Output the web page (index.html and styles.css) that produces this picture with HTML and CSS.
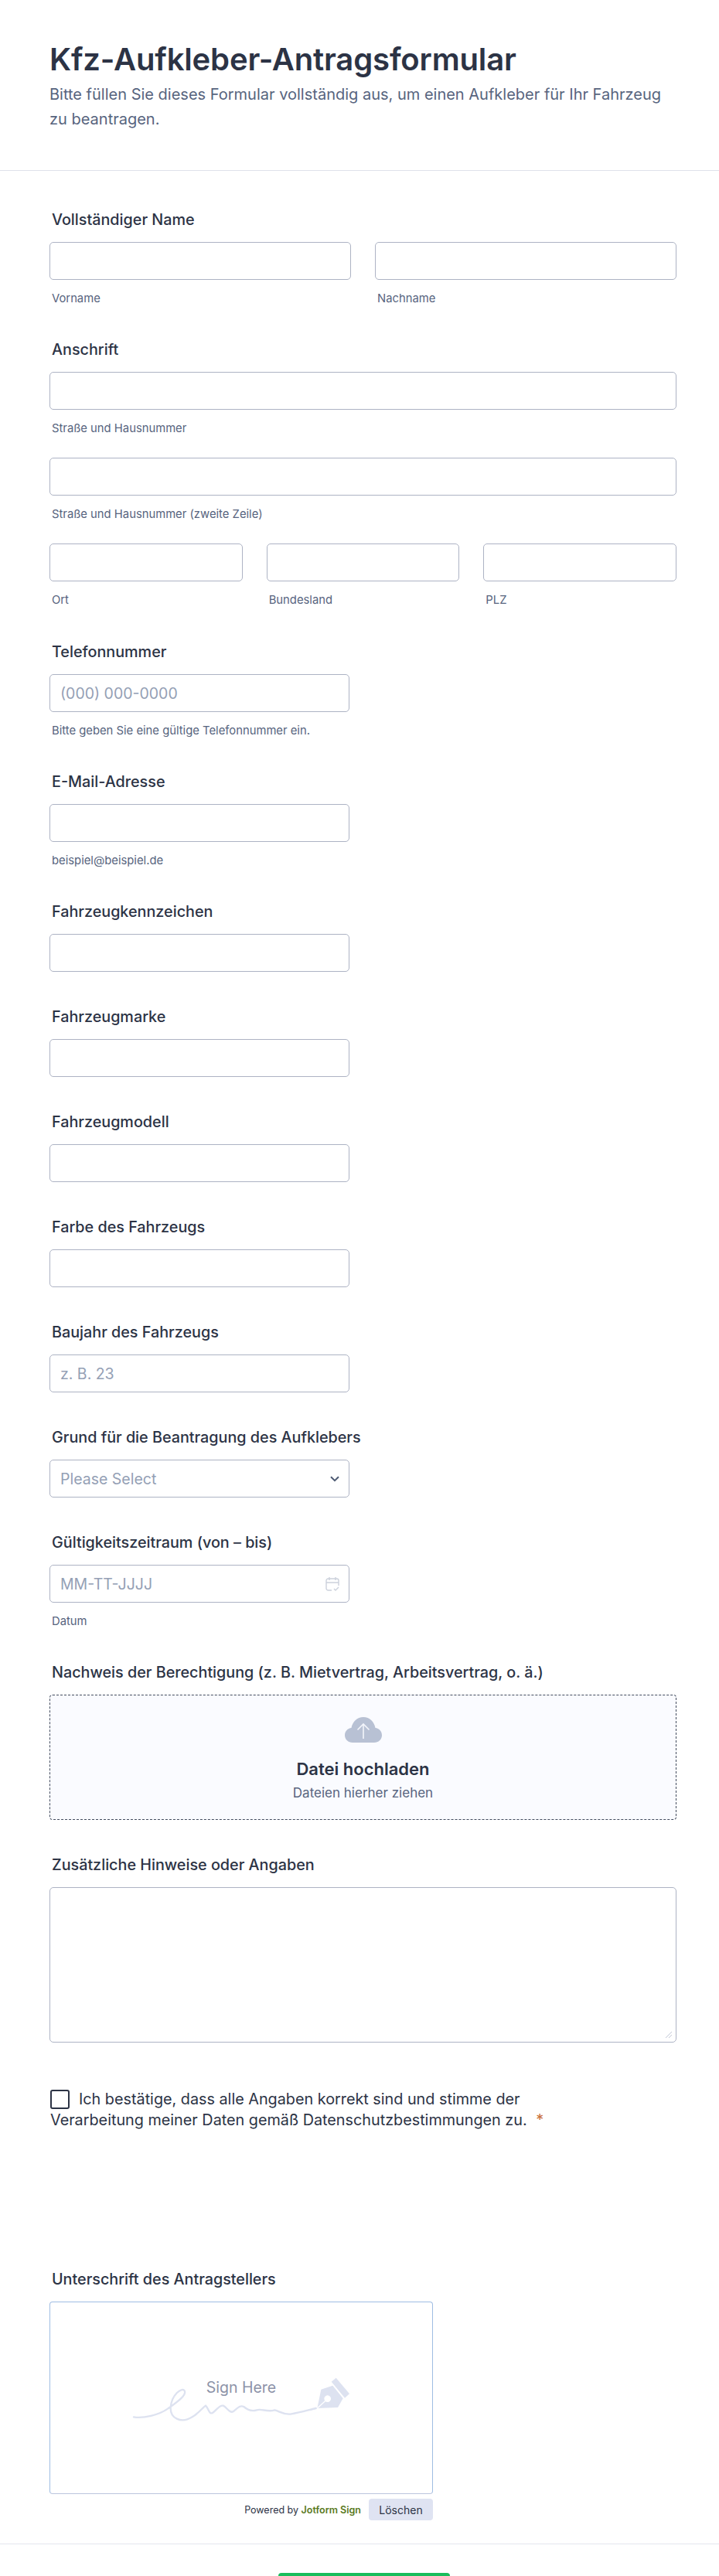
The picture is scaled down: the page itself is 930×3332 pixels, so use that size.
FILE: index.html
```html
<!DOCTYPE html>
<html lang="de">

<head>
  <meta charset="UTF-8">
  <title>Kfz-Aufkleber-Antragsformular</title>
  <link rel="stylesheet" href="styles.css">
</head>

<body>
  <form class="page">
    <header class="head">
      <h1>Kfz-Aufkleber-Antragsformular</h1>
      <p>Bitte füllen Sie dieses Formular vollständig aus, um einen Aufkleber für Ihr Fahrzeug zu beantragen.</p>
    </header>

    <div class="fields">
      <div class="field">
        <label class="lbl">Vollständiger Name</label>
        <div class="cols two">
          <div><div class="box"></div><small>Vorname</small></div>
          <div><div class="box"></div><small>Nachname</small></div>
        </div>
      </div>

      <div class="field addr">
        <label class="lbl">Anschrift</label>
        <div class="box"></div><small>Straße und Hausnummer</small>
        <div class="box next"></div><small>Straße und Hausnummer (zweite Zeile)</small>
        <div class="cols three next">
          <div><div class="box"></div><small>Ort</small></div>
          <div><div class="box"></div><small>Bundesland</small></div>
          <div><div class="box"></div><small>PLZ</small></div>
        </div>
      </div>

      <div class="field">
        <label class="lbl">Telefonnummer</label>
        <div class="box mid ph">(000) 000-0000</div>
        <small>Bitte geben Sie eine gültige Telefonnummer ein.</small>
      </div>

      <div class="field">
        <label class="lbl">E-Mail-Adresse</label>
        <div class="box mid"></div>
        <small>beispiel@beispiel.de</small>
      </div>

      <div class="field">
        <label class="lbl">Fahrzeugkennzeichen</label>
        <div class="box mid"></div>
      </div>

      <div class="field">
        <label class="lbl">Fahrzeugmarke</label>
        <div class="box mid"></div>
      </div>

      <div class="field">
        <label class="lbl">Fahrzeugmodell</label>
        <div class="box mid"></div>
      </div>

      <div class="field">
        <label class="lbl">Farbe des Fahrzeugs</label>
        <div class="box mid"></div>
      </div>

      <div class="field">
        <label class="lbl">Baujahr des Fahrzeugs</label>
        <div class="box mid ph">z. B. 23</div>
      </div>

      <div class="field">
        <label class="lbl">Grund für die Beantragung des Aufklebers</label>
        <div class="box mid ph with-icon">
          Please Select
          <svg class="chevron" width="12" height="8" viewBox="0 0 12 8"><path d="M1 1.2 6 6.2 11 1.2" fill="none" stroke="#4d5a73" stroke-width="2"/></svg>
        </div>
      </div>

      <div class="field">
        <label class="lbl">Gültigkeitszeitraum (von – bis)</label>
        <div class="box mid ph with-icon">
          MM-TT-JJJJ
          <svg class="cal" width="18" height="20" viewBox="0 0 18 20" fill="none" stroke="#ccd1dc" stroke-width="1.4">
            <path d="M8 18H3.5A2.5 2.5 0 0 1 1 15.500V5.500A2.500 2.500 0 0 1 3.500 3h11A2.500 2.500 0 0 1 17 5.500V12M1 8h16M5 1v4M13 1v4"/>
            <path d="M11 16l2 2 4-4"/>
          </svg>
        </div>
        <small>Datum</small>
      </div>

      <div class="field">
        <label class="lbl">Nachweis der Berechtigung (z. B. Mietvertrag, Arbeitsvertrag, o. ä.)</label>
        <div class="upload">
          <svg width="48" height="33" viewBox="0 0 48 33">
            <path d="M10 33C4.500 33 0 29 0 23.500 0 18 4 14.500 8.500 14 10 6 16 0 24 0s14 6 15.500 14C44 14.500 48 18 48 23.500 48 29 43.500 33 38 33Z" fill="#b8c1d4"/>
            <path d="M24 28V9M16.500 16.500 24 9l7.500 7.500" fill="none" stroke="#f3f5fb" stroke-width="1.600"/>
          </svg>
          <strong>Datei hochladen</strong>
          <span>Dateien hierher ziehen</span>
        </div>
      </div>

      <div class="field">
        <label class="lbl">Zusätzliche Hinweise oder Angaben</label>
        <div class="box area">
          <svg class="grip" width="10" height="10" viewBox="0 0 10 10"><path d="M1 9 9 1M5 9 9 5" stroke="#c3c8d6" stroke-width="1"/></svg>
        </div>
      </div>

      <div class="field agree">
        <span class="check"></span>Ich bestätige, dass alle Angaben korrekt sind und stimme der Verarbeitung meiner Daten gemäß Datenschutzbestimmungen zu. <em>*</em>
      </div>

      <div class="field sign">
        <label class="lbl">Unterschrift des Antragstellers</label>
        <div class="sign-box">
          <div class="sign-art">
            <svg width="340" height="110" viewBox="0 0 1020 330">
              <path d="M93 262C130 268 190 255 225 230 255 208 300 178 290 160 280 145 240 175 236 225 234 265 275 290 320 262 345 248 360 225 372 218 385 230 385 255 400 245 415 235 425 215 440 218 455 225 465 250 480 240 495 228 505 215 520 222 535 235 550 242 570 235 590 228 610 245 640 235 660 240 675 255 705 250 740 245 770 235 800 228" fill="none" stroke="#dde2f0" stroke-width="7" stroke-linecap="round"/>
              <path d="M860 125 878 110 930 172 912 188Z" fill="#dde2f0"/>
              <path d="M820 155 865 140 905 190 885 225 805 228ZM845 178a13 13 0 1 0 .1 0Z" fill="#dde2f0" fill-rule="evenodd"/>
              <path d="M806 227 838 198" stroke="#fff" stroke-width="4"/>
            </svg>
            <span>Sign Here</span>
          </div>
        </div>
        <div class="sign-foot">
          <span class="powered">Powered by <b>Jotform Sign</b></span>
          <button type="button" class="clear">Löschen</button>
        </div>
      </div>
    </div>

    <footer class="foot">
      <button type="button" class="submit"></button>
    </footer>
  </form>
</body>

</html>
```

FILE: styles.css
```css
html, body {
  margin: 0;
  height: 3332px;
  overflow: hidden;
  background: #fff;
}
body {
  font-family: Inter, "Liberation Sans", sans-serif;
  color: #2c3345;
}
.page {
  height: 3332px;
  overflow: hidden;
}
.head {
  height: 221px;
  box-sizing: border-box;
  padding: 53px 56px 0 64px;
  border-bottom: 1px solid #dfe1ea;
}
.head h1 {
  margin: 0;
  font-size: 40px;
  line-height: 48px;
  font-weight: 600;
  letter-spacing: -0.15px;
}
.head p {
  margin: 5px 0 0;
  font-size: 20px;
  line-height: 32px;
  color: #57647e;
}
.fields {
  padding: 53px 55px 0 64px;
}
.field {
  margin-bottom: 48px;
}
.addr {
  margin-bottom: 49px;
}
.lbl {
  display: block;
  height: 20px;
  margin: 0 0 19px 3px;
  font-size: 19.75px;
  line-height: 20px;
  font-weight: 500;
  color: #2c3345;
}
.box {
  box-sizing: border-box;
  height: 49px;
  padding: 1px 13px 0;
  border: 1px solid #adb3c4;
  border-radius: 5px;
  background: #fff;
  font-size: 19.5px;
  line-height: 47px;
}
.mid {
  width: 388px;
}
.ph {
  color: #94a0b5;
}
.with-icon {
  display: flex;
  align-items: center;
  justify-content: space-between;
}
.chevron {
  margin-right: -1px;
}
.cal {
  margin-right: -1px;
}
small {
  display: block;
  height: 16px;
  margin: 16px 0 0 3px;
  font-size: 14.8px;
  line-height: 16px;
  color: #57647e;
}
.next {
  margin-top: 30px;
}
.cols {
  display: grid;
}
.two {
  grid-template-columns: 1fr 1fr;
  gap: 31px;
}
.three {
  grid-template-columns: 1fr 1fr 1fr;
  gap: 31px;
}
.upload {
  box-sizing: border-box;
  height: 162px;
  padding-top: 28px;
  border: 1px dashed #434c5e;
  border-radius: 4px;
  background: #fafbff;
  display: flex;
  flex-direction: column;
  align-items: center;
}
.upload strong {
  margin-top: 22px;
  font-size: 22px;
  line-height: 24px;
  font-weight: 600;
}
.upload span {
  margin-top: 7px;
  font-size: 17px;
  line-height: 24px;
  color: #57647e;
}
.area {
  height: 201px;
  display: flex;
  align-items: flex-end;
  justify-content: flex-end;
  padding: 0 4px 4px 0;
}
.agree {
  width: 700px;
  margin: 60px 0 0 1px;
  font-size: 19.8px;
  line-height: 27px;
}
.check {
  display: inline-block;
  box-sizing: border-box;
  width: 25px;
  height: 25px;
  margin-right: 12px;
  vertical-align: -6px;
  border: 2px solid #2c3345;
  border-radius: 3px;
}
.agree em {
  margin-left: 6px;
  font-style: normal;
  color: #c96f3a;
}
.sign {
  margin-top: 182px;
  width: 496px;
  margin-bottom: 0;
}
.sign-box {
  box-sizing: border-box;
  height: 249px;
  border: 1px solid #9fbde3;
  border-bottom-color: #bcc6de;
  border-radius: 4px;
  display: flex;
  align-items: center;
  justify-content: center;
}
.sign-art {
  position: relative;
  width: 340px;
  height: 110px;
  margin-top: -15px;
}
.sign-art span {
  position: absolute;
  left: 0;
  right: 0;
  top: 37px;
  text-align: center;
  font-size: 19.5px;
  line-height: 24px;
  color: #8d93a8;
}
.sign-foot {
  display: flex;
  justify-content: flex-end;
  align-items: center;
  gap: 10px;
  margin-top: 6px;
}
.powered {
  font-size: 12.5px;
  color: #2c3345;
}
.powered b {
  font-weight: 600;
  color: #5a7a1e;
}
.clear {
  width: 83px;
  height: 28px;
  padding: 0;
  border: 0;
  border-radius: 4px;
  background: #dfe3f2;
  font: 14px Inter, sans-serif;
  color: #2c3345;
}
.foot {
  margin-top: 30px;
  padding-top: 37px;
  border-top: 1px solid #e3e5ee;
  text-align: center;
}
.submit {
  display: block;
  width: 222px;
  height: 50px;
  margin: 0 auto 0 360px;
  border: 0;
  border-radius: 4px;
  background: #18bd5b;
}
```
